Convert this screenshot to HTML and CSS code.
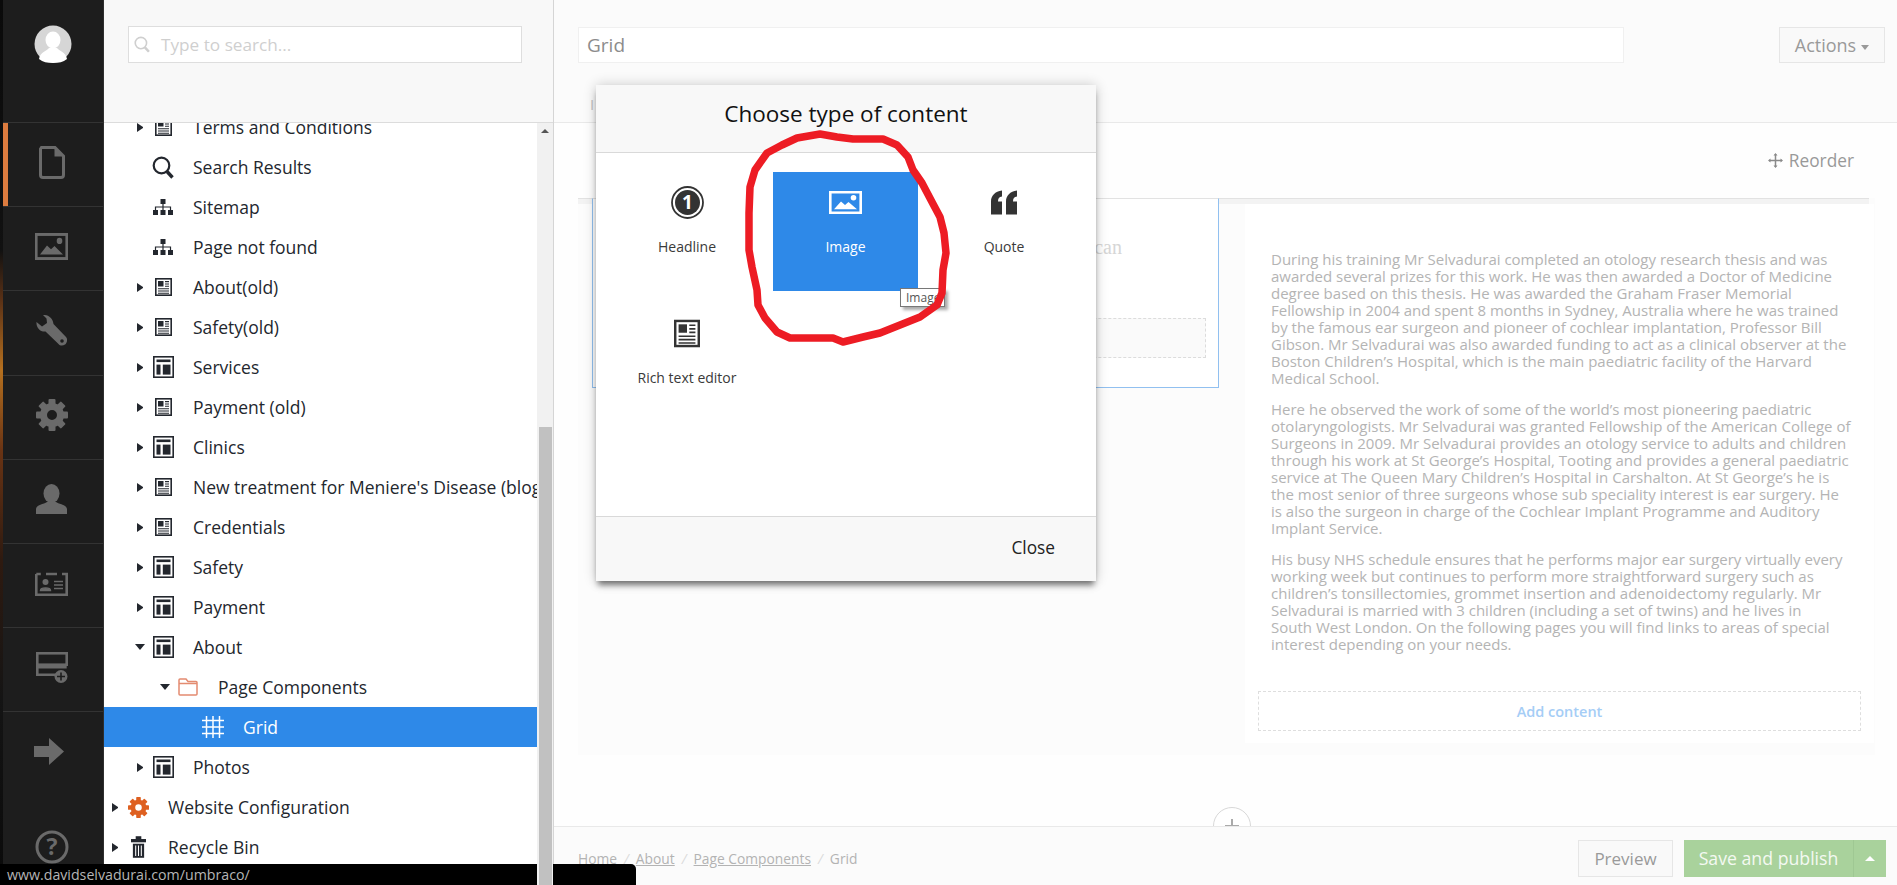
FILE: index.html
```html
<!DOCTYPE html>
<html lang="en">
<head>
<meta charset="utf-8">
<title>Grid</title>
<link rel="stylesheet" href="styles.css">
</head>
<body>
<svg class="sprite" aria-hidden="true">
  <symbol id="i-news" viewBox="0 0 17 18"><rect x=".8" y=".8" width="15.4" height="16.4" fill="none" stroke="currentColor" stroke-width="1.6"/><rect x="3" y="3" width="5.5" height="5.5" fill="currentColor"/><path d="M10 3.6h4M10 6h4M10 8.3h4M3 10.8h11M3 13h11M3 15.2h11" stroke="currentColor" stroke-width="1.1"/></symbol>
  <symbol id="i-layout" viewBox="0 0 21 22"><rect x=".8" y=".8" width="19.4" height="20.4" fill="none" stroke="currentColor" stroke-width="1.6"/><rect x="3.5" y="3.5" width="14" height="2.6" fill="currentColor"/><rect x="3.5" y="8.6" width="4" height="10" fill="currentColor"/><rect x="9.8" y="8.6" width="7.7" height="10" fill="currentColor"/></symbol>
  <symbol id="i-search" viewBox="0 0 22 23"><circle cx="9.5" cy="9.5" r="7.8" fill="none" stroke="currentColor" stroke-width="2.2"/><path d="M15 15.5l5.5 6" stroke="currentColor" stroke-width="3.4"/></symbol>
  <symbol id="i-sitemap" viewBox="0 0 20 16"><rect x="7.5" y="0" width="5" height="5" fill="currentColor"/><path d="M10 5v6M2.5 11V8h15v3" fill="none" stroke="currentColor" stroke-width="1.2"/><rect x="0" y="11" width="5" height="5" fill="currentColor"/><rect x="7.5" y="11" width="5" height="5" fill="currentColor"/><rect x="15" y="11" width="5" height="5" fill="currentColor"/></symbol>
  <symbol id="i-folder" viewBox="0 0 20 18"><path d="M1 5.5V2a1 1 0 0 1 1-1h6l2 2.5h8a1 1 0 0 1 1 1V16a1 1 0 0 1-1 1H2a1 1 0 0 1-1-1zM1 5.5h18" fill="none" stroke="currentColor" stroke-width="1.5"/></symbol>
  <symbol id="i-grid" viewBox="0 0 22 22"><path d="M4.500 0v22M11 0v22M17.500 0v22M0 4.500h22M0 11h22M0 17.500h22" stroke="currentColor" stroke-width="1.500"/></symbol>
  <symbol id="i-gear" viewBox="0 0 32 32"><circle cx="16" cy="16" r="8.500" fill="none" stroke="currentColor" stroke-width="7"/><g fill="currentColor"><rect x="12.500" y="0" width="7" height="6" rx="1"/><rect x="12.500" y="26" width="7" height="6" rx="1"/><rect x="0" y="12.500" width="6" height="7" rx="1"/><rect x="26" y="12.500" width="6" height="7" rx="1"/><rect x="12.500" y="0" width="7" height="6" rx="1" transform="rotate(45 16 16)"/><rect x="12.500" y="26" width="7" height="6" rx="1" transform="rotate(45 16 16)"/><rect x="0" y="12.500" width="6" height="7" rx="1" transform="rotate(45 16 16)"/><rect x="26" y="12.500" width="6" height="7" rx="1" transform="rotate(45 16 16)"/></g></symbol>
  <symbol id="i-trash" viewBox="0 0 16 23"><rect x="0" y="3" width="16" height="3.500" fill="currentColor"/><rect x="5" y="0" width="6" height="3.500" fill="currentColor"/><path d="M2 8h12v15H2z" fill="currentColor"/><path d="M5 10v11M8 10v11M11 10v11" stroke="#fff" stroke-width="1.100"/></symbol>
  <symbol id="i-file" viewBox="0 0 26 33"><path d="M2.500 1.500H16L24.500 10V29a2.500 2.500 0 0 1-2.500 2.500H4A2.500 2.500 0 0 1 1.500 29V3z" fill="none" stroke="currentColor" stroke-width="3"/><path d="M15.500 1.500V10.500H24.500z" fill="currentColor"/></symbol>
  <symbol id="i-image" viewBox="0 0 33 24" preserveAspectRatio="none"><rect x="1.300" y="1.300" width="30.400" height="21.400" fill="none" stroke="currentColor" stroke-width="2.600"/><path d="M5 19l7-8 4 3.500 3.500-3 8.500 7.500z" fill="currentColor"/><circle cx="24.500" cy="7" r="2.800" fill="currentColor"/></symbol>
  <symbol id="i-wrench" viewBox="0 0 31 31"><path d="M7 0c5-.5 10 3 10.500 9L30 22c2 2 1 6-1 7.500s-5 1.500-6.500-.5L9.500 16.500C4 17 0 12.500.5 7L6 11.500 11 8l-.5-4.500z" fill="currentColor"/><circle cx="26" cy="26" r="1.800" fill="#1d1d1d"/></symbol>
  <symbol id="i-user" viewBox="0 0 31 30"><ellipse cx="15.500" cy="9.500" rx="8" ry="9.500" fill="currentColor"/><path d="M0 30v-5c0-4 8-5 11-7h9c3 2 11 3 11 7v5z" fill="currentColor"/></symbol>
  <symbol id="i-card" viewBox="0 0 33 25"><path d="M1.300 3h4.500M11 3h11M27 3h4.700v20.700H1.300V3" fill="none" stroke="currentColor" stroke-width="2.600"/><circle cx="10.500" cy="11" r="3" fill="currentColor"/><path d="M5.500 19.500c0-3.500 10-3.500 10 0zM19 10.500h9M19 14h9M19 17.500h9" fill="currentColor" stroke="currentColor" stroke-width="1.400"/></symbol>
  <symbol id="i-layout-plus" viewBox="0 0 32 31"><rect x="1.300" y="1.300" width="29.400" height="11.400" fill="none" stroke="currentColor" stroke-width="2.600"/><path d="M21 22.700H1.300V15.300h29.400" fill="none" stroke="currentColor" stroke-width="2.600"/><circle cx="25" cy="24.500" r="6.500" fill="currentColor"/><path d="M25 20.500v8M21 24.500h8" stroke="#1d1d1d" stroke-width="1.600"/></symbol>
  <symbol id="i-arrow" viewBox="0 0 30 27"><path d="M0 8h15V0l15 13.500L15 27v-8H0z" fill="currentColor"/></symbol>
  <symbol id="i-quote" viewBox="0 0 26 24"><path d="M0 24V11C0 5 4 1 11 0v6C8 6.500 7 8 7 11h4v13zM15 24V11c0-6 4-10 11-11v6c-3 .5-4 2-4 5h4v13z" fill="currentColor"/></symbol>
  <symbol id="i-move" viewBox="0 0 15 15"><path d="M7.500 1v13M1 7.500h13" stroke="currentColor" stroke-width="1.500"/><path d="M5.500 2.500l2-2.500 2 2.500zM5.500 12.500l2 2.500 2-2.500zM2.500 5.500L0 7.500l2.500 2zM12.500 5.500l2.500 2-2.500 2z" fill="currentColor"/></symbol>
  <symbol id="i-plus" viewBox="0 0 14 14"><path d="M7 0v14M0 7h14" stroke="currentColor" stroke-width="2"/></symbol>
</svg>

<div class="wallpaper"></div>

<nav class="rail">
  <div class="rail-top">
    <svg class="avatar" viewBox="0 0 38 38"><circle cx="19" cy="19" r="18.500" fill="#d6d6d6"/><ellipse cx="19" cy="15" rx="7.500" ry="8.500" fill="#fff"/><path d="M5 34c1-7 8-8 10-11h8c2 3 9 4 10 11-4 3-8 4-14 4s-10-1-14-4z" fill="#fff"/></svg>
  </div>
  <a class="rail-item is-active"><svg class="rail-file"><use href="#i-file"/></svg></a>
  <a class="rail-item"><svg class="rail-image"><use href="#i-image"/></svg></a>
  <a class="rail-item"><svg class="rail-wrench"><use href="#i-wrench"/></svg></a>
  <a class="rail-item"><svg class="rail-gear"><use href="#i-gear"/></svg></a>
  <a class="rail-item"><svg class="rail-user"><use href="#i-user"/></svg></a>
  <a class="rail-item"><svg class="rail-card"><use href="#i-card"/></svg></a>
  <a class="rail-item"><svg class="rail-plus"><use href="#i-layout-plus"/></svg></a>
  <a class="rail-item no-line"><svg class="rail-arrow"><use href="#i-arrow"/></svg></a>
  <a class="rail-help"><svg class="help-icon" viewBox="0 0 34 34"><circle cx="17" cy="17" r="15" fill="none" stroke="currentColor" stroke-width="3"/><text x="17" y="25" text-anchor="middle" class="help-mark">?</text></svg></a>
</nav>

<aside class="tree-panel">
  <div class="tree-head">
    <label class="tree-search">
      <svg class="tree-search-icon"><use href="#i-search"/></svg>
      <span class="tree-search-text">Type to search...</span>
    </label>
  </div>
  <div class="tree-body">
    <ul class="tree">
      <li class="row lvl2"><i class="caret"></i><span class="ico"><svg class="s-news"><use href="#i-news"/></svg></span><span class="label">Terms and Conditions</span></li>
      <li class="row lvl2"><i class="caret none"></i><span class="ico"><svg class="s-search"><use href="#i-search"/></svg></span><span class="label">Search Results</span></li>
      <li class="row lvl2"><i class="caret none"></i><span class="ico"><svg class="s-sitemap"><use href="#i-sitemap"/></svg></span><span class="label">Sitemap</span></li>
      <li class="row lvl2"><i class="caret none"></i><span class="ico"><svg class="s-sitemap"><use href="#i-sitemap"/></svg></span><span class="label">Page not found</span></li>
      <li class="row lvl2"><i class="caret"></i><span class="ico"><svg class="s-news"><use href="#i-news"/></svg></span><span class="label">About(old)</span></li>
      <li class="row lvl2"><i class="caret"></i><span class="ico"><svg class="s-news"><use href="#i-news"/></svg></span><span class="label">Safety(old)</span></li>
      <li class="row lvl2"><i class="caret"></i><span class="ico"><svg class="s-layout"><use href="#i-layout"/></svg></span><span class="label">Services</span></li>
      <li class="row lvl2"><i class="caret"></i><span class="ico"><svg class="s-news"><use href="#i-news"/></svg></span><span class="label">Payment (old)</span></li>
      <li class="row lvl2"><i class="caret"></i><span class="ico"><svg class="s-layout"><use href="#i-layout"/></svg></span><span class="label">Clinics</span></li>
      <li class="row lvl2"><i class="caret"></i><span class="ico"><svg class="s-news"><use href="#i-news"/></svg></span><span class="label">New treatment for Meniere's Disease (blog)</span></li>
      <li class="row lvl2"><i class="caret"></i><span class="ico"><svg class="s-news"><use href="#i-news"/></svg></span><span class="label">Credentials</span></li>
      <li class="row lvl2"><i class="caret"></i><span class="ico"><svg class="s-layout"><use href="#i-layout"/></svg></span><span class="label">Safety</span></li>
      <li class="row lvl2"><i class="caret"></i><span class="ico"><svg class="s-layout"><use href="#i-layout"/></svg></span><span class="label">Payment</span></li>
      <li class="row lvl2"><i class="caret open"></i><span class="ico"><svg class="s-layout"><use href="#i-layout"/></svg></span><span class="label">About</span></li>
      <li class="row lvl3"><i class="caret open"></i><span class="ico"><svg class="s-folder"><use href="#i-folder"/></svg></span><span class="label">Page Components</span></li>
      <li class="row lvl4 is-selected"><i class="caret none"></i><span class="ico"><svg class="s-grid"><use href="#i-grid"/></svg></span><span class="label">Grid</span></li>
      <li class="row lvl2"><i class="caret"></i><span class="ico"><svg class="s-layout"><use href="#i-layout"/></svg></span><span class="label">Photos</span></li>
      <li class="row lvl1"><i class="caret"></i><span class="ico"><svg class="s-gear"><use href="#i-gear"/></svg></span><span class="label">Website Configuration</span></li>
      <li class="row lvl1"><i class="caret"></i><span class="ico"><svg class="s-trash"><use href="#i-trash"/></svg></span><span class="label">Recycle Bin</span></li>
    </ul>
    <div class="scrollbar"><i class="scroll-up"></i><div class="scroll-thumb"></div></div>
  </div>
</aside>

<main class="main">
  <header class="main-head">
    <div class="title-row">
      <div class="title-input">Grid</div>
      <button class="btn-actions">Actions<i class="btn-caret"></i></button>
    </div>
    <div class="tab-row">I</div>
  </header>
  <section class="main-body">
    <div class="toolbar"><span class="reorder"><svg class="move-icon"><use href="#i-move"/></svg>Reorder</span></div>
    <div class="panel">
      <div class="panel-band"></div>
      <div class="panel-cols">
        <div class="col-left">
          <div class="col-heading">can</div>
          <div class="add-box"></div>
        </div>
        <div class="col-right">
          <div class="rte">
            <p>During his training Mr Selvadurai completed an otology research thesis and was awarded several prizes for this work. He was then awarded a Doctor of Medicine degree based on this thesis. He was awarded the Graham Fraser Memorial Fellowship in 2004 and spent 8 months in Sydney, Australia where he was trained by the famous ear surgeon and pioneer of cochlear implantation, Professor Bill Gibson. Mr Selvadurai was also awarded funding to act as a clinical observer at the Boston Children’s Hospital, which is the main paediatric facility of the Harvard Medical School.</p>
            <p>Here he observed the work of some of the world’s most pioneering paediatric otolaryngologists. Mr Selvadurai was granted Fellowship of the American College of Surgeons in 2009. Mr Selvadurai provides an otology service to adults and children through his work at St George’s Hospital, Tooting and provides a general paediatric service at The Queen Mary Children’s Hospital in Carshalton. At St George’s he is the most senior of three surgeons whose sub speciality interest is ear surgery. He is also the surgeon in charge of the Cochlear Implant Programme and Auditory Implant Service.</p>
            <p>His busy NHS schedule ensures that he performs major ear surgery virtually every working week but continues to perform more straightforward surgery such as children’s tonsillectomies, grommet insertion and adenoidectomy regularly. Mr Selvadurai is married with 3 children (including a set of twins) and he lives in<br>South West London. On the following pages you will find links to areas of special interest depending on your needs.</p>
          </div>
          <div class="add-content">Add content</div>
        </div>
      </div>
    </div>
    <div class="add-row"><svg class="add-plus"><use href="#i-plus"/></svg></div>
  </section>
  <footer class="main-foot">
    <nav class="crumbs"><a>Home</a><i>/</i><a>About</a><i>/</i><a>Page Components</a><i>/</i><span>Grid</span></nav>
    <button class="btn-preview">Preview</button>
    <div class="btn-save"><span class="save-text">Save and publish</span><span class="save-caret"><i></i></span></div>
  </footer>
</main>

<div class="modal">
  <div class="modal-head">Choose type of content</div>
  <div class="modal-body">
    <div class="cell"><svg class="c-headline" viewBox="0 0 33 33"><circle cx="16.500" cy="16.500" r="15.500" fill="none" stroke="currentColor" stroke-width="1.800"/><circle cx="16.500" cy="16.500" r="12.500" fill="currentColor"/><text x="16.500" y="23" text-anchor="middle" class="headline-mark">1</text></svg><span>Headline</span></div>
    <div class="cell is-hover"><svg class="c-image"><use href="#i-image"/></svg><span>Image</span></div>
    <div class="cell"><svg class="c-quote"><use href="#i-quote"/></svg><span>Quote</span></div>
    <div class="cell"><svg class="c-news"><use href="#i-news"/></svg><span>Rich text editor</span></div>
  </div>
  <div class="modal-foot"><span class="close">Close</span></div>
</div>

<div class="tooltip">Image</div>

<svg class="scribble" viewBox="0 0 1897 885"><path d="M820 134L837 137 853 139 883 139 897 145 908 157 913 170 922 183 932 202 940 217 944 233 946 253 943 270 942 293 937 305 920 317 900 325 880 333 863 337 843 342 833 338 790 338 777 332 765 318 758 305 757 290 752 267 749 250 749 213 750 187 755 170 767 153 782 145 797 138z" fill="none" stroke="#ed1c24" stroke-width="7.500" stroke-linejoin="round"/></svg>

<div class="status">www.davidselvadurai.com/umbraco/</div>
</body>
</html>
```

FILE: styles.css
```css
* { box-sizing: border-box; }
html, body { margin: 0; height: 100%; }
body {
  width: 1897px;
  height: 885px;
  overflow: hidden;
  position: relative;
  display: flex;
  font-family: "Open Sans", "Noto Sans", sans-serif;
  background: #fff;
  color: #222;
}
.sprite { display: none; }
ul { list-style: none; margin: 0; padding: 0; }
button { font-family: inherit; }

/* wallpaper peeking through on the far left */
.wallpaper {
  flex: 0 0 3px;
  background: linear-gradient(#0a0a0a 0, #111 250px, #5a3116 300px, #b5701f 370px, #6a3414 450px, #2e1a10 560px, #141414 700px, #0a0a0a 885px);
}

/* left rail */
.rail {
  flex: 0 0 101px;
  background: #1d1d1d;
  border-right: 1px solid #2e2e2e;
  display: flex;
  flex-direction: column;
  color: #6a6a6a;
}
.rail-top {
  flex: none;
  height: 123px;
  border-bottom: 1px solid #333;
  display: flex;
  justify-content: center;
  padding-top: 25px;
}
.avatar { width: 38px; height: 38px; }
.rail-item {
  flex: none;
  height: 84.200px;
  border-bottom: 1px solid #333;
  display: flex;
  align-items: center;
  justify-content: center;
  padding: 0 3px 5px 0;
}
.rail-item.no-line { border-bottom: 0; }
.rail-item.is-active { box-shadow: inset 5px 0 0 #dd7c3f; }
.rail-file { width: 26px; height: 33px; }
.rail-image { width: 33px; height: 27px; }
.rail-wrench { width: 31px; height: 31px; }
.rail-gear { width: 32px; height: 32px; }
.rail-user { width: 31px; height: 30px; }
.rail-card { width: 33px; height: 25px; }
.rail-plus { width: 32px; height: 31px; }
.rail-arrow { width: 30px; height: 27px; margin-right: 6px; }
.rail-help { flex: none; display: flex; justify-content: center; padding: 33px 3px 0 0; }
.help-icon { width: 34px; height: 34px; flex: none; }
.help-mark { font: 700 23px "Open Sans", sans-serif; fill: currentColor; }

/* tree panel */
.tree-panel {
  flex: 0 0 450px;
  width: 450px;
  min-width: 0;
  border-right: 1px solid #d5d5d5;
  display: flex;
  flex-direction: column;
  background: #fff;
}
.tree-head {
  flex: none;
  height: 123px;
  background: #f8f8f8;
  border-bottom: 1px solid #dcdcdc;
  padding: 26px 0 0 24px;
  position: relative;
  z-index: 1;
}
.tree-search {
  width: 394px;
  height: 37px;
  background: #fff;
  border: 1.500px solid #dedede;
  display: flex;
  align-items: center;
  padding-left: 5px;
  color: #cfcfcf;
  font-size: 17.200px;
}
.tree-search-icon { width: 16px; height: 17px; margin-right: 11px; }
.tree-body { flex: 1; display: flex; min-height: 0; min-width: 0; }
.tree { flex: 1; min-width: 0; overflow: hidden; margin-top: -16px; }
.row {
  height: 40px;
  display: flex;
  align-items: center;
  white-space: nowrap;
  overflow: hidden;
  font-size: 17.500px;
  color: #23272e;
}
.lvl1 { padding-left: 8px; }
.lvl2 { padding-left: 33px; }
.lvl3 { padding-left: 58px; }
.lvl4 { padding-left: 83px; }
.caret {
  flex: 0 0 6px;
  width: 6px;
  height: 9px;
  margin-right: 8px;
  border-style: solid;
  border-width: 4.500px 0 4.500px 6px;
  border-color: transparent transparent transparent #23272e;
}
.caret.open {
  flex-basis: 10px;
  width: 10px;
  height: 6px;
  margin: 0 6px 0 -2px;
  border-width: 6px 5px 0;
  border-color: #23272e transparent transparent;
}
.caret.none { border-color: transparent; }
.ico { flex: 0 0 24px; display: flex; justify-content: center; margin-right: 18px; }
.s-news { width: 17px; height: 18px; }
.s-layout { width: 21px; height: 22px; }
.s-search { width: 22px; height: 23px; }
.s-sitemap { width: 20px; height: 16px; }
.s-folder { width: 20px; height: 18px; color: #e38b70; }
.s-grid { width: 22px; height: 22px; color: #fff; }
.s-gear { width: 21px; height: 21px; color: #de6021; }
.s-trash { width: 15px; height: 22px; color: #23272e; }
.is-selected { background: #2e89e8; color: #fff; }
.scrollbar {
  flex: 0 0 16px;
  background: #f1f1f1;
  display: flex;
  flex-direction: column;
  align-items: center;
  position: relative;
  z-index: 1;
}
.scroll-up {
  margin-top: 6px;
  border-style: solid;
  border-width: 0 4px 4px;
  border-color: transparent transparent #555;
}
.scroll-thumb { margin-top: 294px; width: 13px; flex: 1; background: #c1c1c1; }

/* main */
.main { flex: 1; min-width: 0; display: flex; flex-direction: column; background: #fefefe; }
.main-head {
  flex: none;
  height: 123px;
  background: #fbfbfb;
  border-bottom: 1px solid #e9e9e9;
  padding: 27px 12px 0 24px;
}
.title-row { display: flex; justify-content: space-between; }
.title-input {
  width: 1046px;
  height: 36px;
  background: #fff;
  border: 1px solid #f0f0f0;
  padding-left: 8px;
  line-height: 34px;
  font-size: 19px;
  color: #8c8c8c;
}
.btn-actions {
  width: 106px;
  height: 36px;
  background: #f9f9f9;
  border: 1px solid #e6e6e6;
  color: #9a9a9a;
  font-size: 18px;
  padding: 0;
}
.btn-caret {
  display: inline-block;
  margin-left: 5px;
  vertical-align: middle;
  border-style: solid;
  border-width: 5px 4px 0;
  border-color: #999 transparent transparent;
}
.tab-row { margin: 33px 0 0 12px; font-size: 15px; color: #c4c4c4; line-height: 16px; }

.main-body { flex: 1; min-height: 0; overflow: hidden; display: flex; flex-direction: column; padding: 0 22px 0 24px; }
.toolbar { flex: 0 0 75px; display: flex; justify-content: flex-end; align-items: center; padding: 0 21px 0 0; }
.reorder { display: flex; align-items: center; gap: 6px; font-size: 17.300px; color: #999; }
.move-icon { width: 15px; height: 15px; color: #8a8a8a; }
.panel { flex: none; height: 557px; background: #fcfcfc; display: flex; flex-direction: column; }
.panel-band { flex: 0 0 6px; margin-right: 6px; background: #f3f3f3; border-top: 1px solid #e2e2e2; }
.panel-cols { flex: 1; display: flex; padding: 0 1px 12px 14px; }
.col-left {
  flex: none;
  width: 627px;
  height: 190px;
  margin-top: -6px;
  background: #fff;
  border: 1px solid #91c0f0;
  border-top: 1px solid #e2e2e2;
  position: relative;
  display: flex;
  flex-direction: column;
}
.col-heading {
  padding: 36px 96px 0 0;
  text-align: right;
  font: 400 20px/24px "Liberation Serif", serif;
  color: #d6d6d6;
}
.add-box { margin: 59px 12px 0 12px; height: 40px; background: #fafafa; border: 1px dashed #dcdcdc; }
.col-right {
  margin-left: 26px;
  flex: 1;
  background: #fff;
  padding: 47px 13px 0 13px;
  display: flex;
  flex-direction: column;
}
.rte { padding: 0 0 0 13px; width: 593px; font-size: 15px; line-height: 17px; color: #b4b4b4; }
.rte p { margin: 0 0 14px; }
.add-content {
  margin-top: 24px;
  height: 40px;
  border: 1px dashed #dedede;
  text-align: center;
  line-height: 40px;
  font-size: 14.500px;
  font-weight: 600;
  color: #a5cdf6;
}
.add-row {
  flex: none;
  margin-top: auto;
  margin-bottom: -19px;
  margin-left: 11px;
  align-self: center;
  width: 38px;
  height: 38px;
  border: 1px solid #d8d8d8;
  border-radius: 50%;
  background: #fff;
  display: flex;
  align-items: center;
  justify-content: center;
  color: #aaa;
}
.add-plus { width: 14px; height: 14px; }
.main-foot {
  flex: 0 0 59px;
  background: #fbfbfb;
  border-top: 1px solid #e9e9e9;
  display: flex;
  align-items: flex-start;
  padding: 13px 11px 0 24px;
  position: relative;
}
.crumbs { flex: 1; display: flex; align-items: center; height: 37px; font-size: 13.800px; color: #b3b3b3; }
.crumbs a { text-decoration: underline; }
.crumbs i { margin: 0 7px; color: #dcdcdc; }
.btn-preview {
  width: 95px;
  height: 37px;
  margin-right: 11px;
  background: #f9f9f9;
  border: 1px solid #e6e6e6;
  color: #9a9a9a;
  font-size: 17px;
  padding: 0;
}
.btn-save { width: 202px; height: 37px; background: #a9d29c; display: flex; color: #f4f9f2; font-size: 17.700px; }
.save-text { flex: 1; text-align: center; line-height: 36px; }
.save-caret { flex: 0 0 33px; border-left: 1px solid #9fc893; display: flex; align-items: center; justify-content: center; }
.save-caret i { border-style: solid; border-width: 0 5px 5px; border-color: transparent transparent #fff; }

/* overlays */
.modal {
  position: absolute;
  left: 596px;
  top: 85px;
  width: 500px;
  height: 496px;
  background: #fff;
  box-shadow: 0 6px 6px -2px rgba(0,0,0,.5), 0 0 12px rgba(0,0,0,.2);
  display: flex;
  flex-direction: column;
}
.modal-head {
  flex: 0 0 68px;
  background: #f8f8f8;
  border-bottom: 1px solid #d9d9d9;
  text-align: center;
  line-height: 58px;
  font-size: 22.500px;
  font-weight: 500;
  color: #111;
}
.modal-body {
  flex: 1;
  display: grid;
  grid-template-columns: repeat(3, 145px);
  grid-auto-rows: 119px;
  gap: 12px 13.500px;
  padding: 19px 0 0 18.500px;
}
.cell {
  display: flex;
  flex-direction: column;
  align-items: center;
  color: #3a3a3a;
  font-size: 14px;
  padding-top: 14px;
}
.cell svg { height: 33px; color: #333; flex: none; }
.cell span { margin-top: 18px; line-height: 20px; }
.c-headline { width: 33px; }
.headline-mark { font: 700 19px "Open Sans", sans-serif; fill: #fff; }
.cell .c-image { width: 33px; height: 23px; margin: 5px 0; }
.c-quote { width: 26px; }
.c-news { width: 26px; }
.is-hover { background: #2e89e8; color: #fff; }
.cell.is-hover svg { color: #fff; }
.modal-foot {
  flex: 0 0 65px;
  background: #f8f8f8;
  border-top: 1px solid #d9d9d9;
  display: flex;
  align-items: center;
  justify-content: flex-end;
  padding: 0 41px 4px 0;
  font-size: 17.300px;
  color: #222;
}
.tooltip {
  position: absolute;
  left: 900px;
  top: 288px;
  width: 45px;
  height: 19px;
  background: #fff;
  border: 1px solid #777;
  box-shadow: 3px 3px 3px #aaa;
  font-size: 12px;
  line-height: 17px;
  padding-left: 5px;
  color: #555;
}
.scribble { position: absolute; left: 0; top: 0; width: 1897px; height: 885px; pointer-events: none; }
.status {
  position: absolute;
  left: 0;
  bottom: 0;
  width: 636px;
  height: 21px;
  background: #000;
  border-top-right-radius: 5px;
  color: #b5b5b5;
  font-size: 14.200px;
  line-height: 21px;
  padding-left: 7px;
}
```
